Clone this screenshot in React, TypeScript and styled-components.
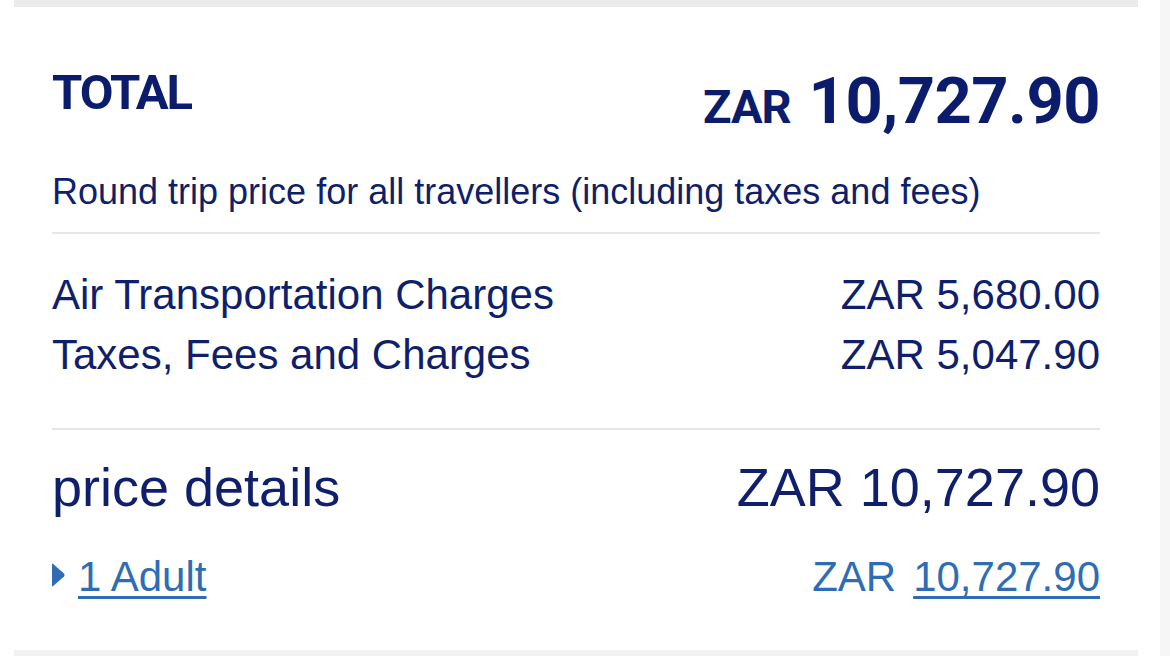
import React from "react";
import styled, { createGlobalStyle } from "styled-components";

const GlobalStyle = createGlobalStyle`
  html, body {
    margin: 0;
    padding: 0;
    background: #ffffff;
  }
  body {
    font-family: "Liberation Sans", Arial, sans-serif;
  }
`;

const Page = styled.div`
  display: flex;
  width: 1170px;
  height: 656px;
  overflow: hidden;
  background: #ffffff;
`;

const Main = styled.div`
  flex: 0 0 1160px;
  display: flex;
  flex-direction: column;
`;

const SideStrip = styled.div`
  flex: 1;
  background: #f6f6f6;
`;

const Strip = styled.div<{ $h: number; $color: string }>`
  margin: 0 22px 0 14px;
  height: ${(p) => p.$h}px;
  background: ${(p) => p.$color};
  flex: 0 0 auto;
`;

const Card = styled.div`
  flex: 1;
  display: flex;
  flex-direction: column;
  padding: 61px 60px 0 52px;
  color: #0f1f6b;
`;

const HeaderRow = styled.div`
  display: flex;
  justify-content: space-between;
  align-items: flex-start;
`;

const TotalLabel = styled.div`
  font-family: Roboto, "Liberation Sans", sans-serif;
  font-weight: 700;
  font-size: 49px;
  line-height: 49px;
  letter-spacing: -2px;
  color: #0a1c6b;
`;

const TotalPrice = styled.div`
  margin-top: 1px;
  font-family: Roboto, "Liberation Sans", sans-serif;
  font-weight: 700;
  font-size: 65px;
  line-height: 65px;
  color: #0a1c6b;
  letter-spacing: -0.5px;
`;

const Currency = styled.span`
  font-size: 47px;
  letter-spacing: -1px;
  margin-right: 18px;
`;

const Subtitle = styled.div`
  margin-top: 31px;
  font-size: 36px;
  line-height: 44px;
  color: #0f1f6b;
`;

const Divider = styled.div<{ $mt: number }>`
  margin-top: ${(p) => p.$mt}px;
  height: 2px;
  background: #e6e6e6;
`;

const Rows = styled.div`
  margin-top: 31px;
  display: flex;
  flex-direction: column;
`;

const Row = styled.div`
  display: flex;
  justify-content: space-between;
  font-size: 42px;
  line-height: 60px;
  color: #0f1f6b;
`;

const DetailsRow = styled.div`
  margin-top: 25px;
  display: flex;
  justify-content: space-between;
  font-size: 54px;
  line-height: 64px;
  color: #0f1f6b;
`;

const LinkRow = styled.div`
  margin-top: 28px;
  display: flex;
  justify-content: space-between;
  align-items: center;
  font-size: 42px;
  line-height: 60px;
  color: #2e6db4;
`;

const Toggle = styled.div`
  display: flex;
  align-items: center;
  gap: 13px;
`;

const Arrow = styled.svg`
  display: block;
  width: 13px;
  height: 24px;
  min-width: 13px;
  flex: 0 0 13px;
  margin-top: -5px;
`;

const LinkText = styled.a`
  color: #2e6db4;
  text-decoration: underline;
  text-decoration-thickness: 3px;
  text-underline-offset: 5px;
`;

const LinkPrice = styled.div`
  display: flex;
  align-items: baseline;
  gap: 17px;
`;

export default function App() {
  return (
    <>
      <GlobalStyle />
      <Page>
        <Main>
          <Strip $h={7} $color="#ebebeb" />
          <Card>
            <HeaderRow>
              <TotalLabel>TOTAL</TotalLabel>
              <TotalPrice>
                <Currency>ZAR</Currency>10,727.90
              </TotalPrice>
            </HeaderRow>
            <Subtitle>Round trip price for all travellers (including taxes and fees)</Subtitle>
            <Divider $mt={18} />
            <Rows>
              <Row>
                <span>Air Transportation Charges</span>
                <span>ZAR 5,680.00</span>
              </Row>
              <Row>
                <span>Taxes, Fees and Charges</span>
                <span>ZAR 5,047.90</span>
              </Row>
            </Rows>
            <Divider $mt={43} />
            <DetailsRow>
              <span>price details</span>
              <span>ZAR 10,727.90</span>
            </DetailsRow>
            <LinkRow>
              <Toggle>
                <Arrow viewBox="0 0 13 24">
                  <path
                    d="M0 1.5 Q0 0 1.2 0.9 L12.2 10.8 Q13 12 12.2 13.2 L1.2 23.1 Q0 24 0 22.5 Z"
                    fill="#2e6db4"
                  />
                </Arrow>
                <LinkText href="#">1 Adult</LinkText>
              </Toggle>
              <LinkPrice>
                <span>ZAR</span>
                <LinkText href="#">10,727.90</LinkText>
              </LinkPrice>
            </LinkRow>
          </Card>
          <Strip $h={6} $color="#f2f2f2" />
        </Main>
        <SideStrip />
      </Page>
    </>
  );
}
